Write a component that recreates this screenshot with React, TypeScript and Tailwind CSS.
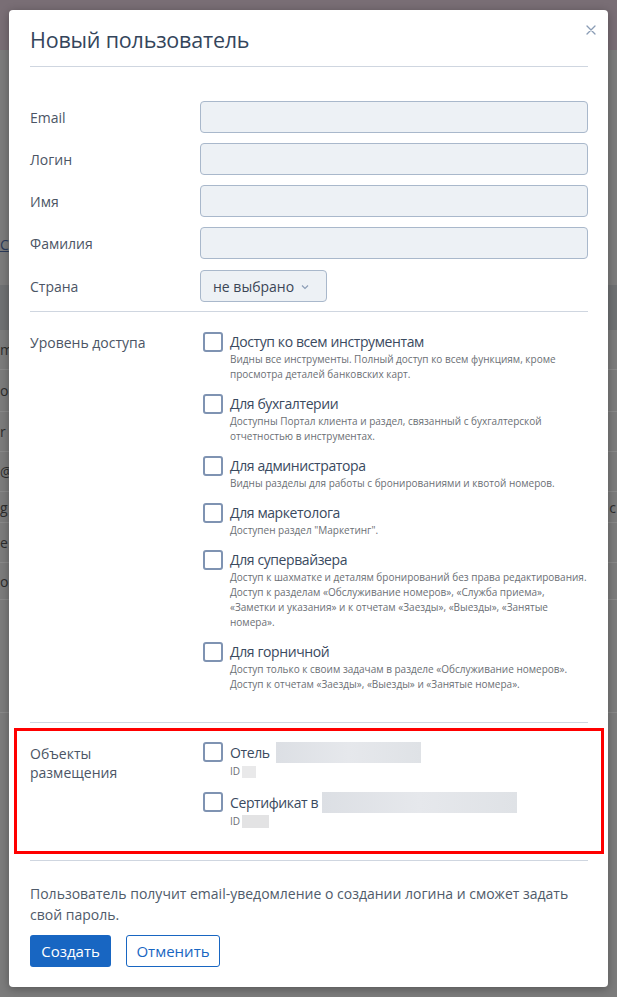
import React from "react";

const font = { fontFamily: '"Open Sans", "Noto Sans", sans-serif' };

type Item = { title: string; desc: string[] };

const items: Item[] = [
  {
    title: "Доступ ко всем инструментам",
    desc: [
      "Видны все инструменты. Полный доступ ко всем функциям, кроме",
      "просмотра деталей банковских карт.",
    ],
  },
  {
    title: "Для бухгалтерии",
    desc: [
      "Доступны Портал клиента и раздел, связанный с бухгалтерской",
      "отчетностью в инструментах.",
    ],
  },
  {
    title: "Для администратора",
    desc: ["Видны разделы для работы с бронированиями и квотой номеров."],
  },
  {
    title: "Для маркетолога",
    desc: ['Доступен раздел "Маркетинг".'],
  },
  {
    title: "Для супервайзера",
    desc: [
      "Доступ к шахматке и деталям бронирований без права редактирования.",
      "Доступ к разделам «Обслуживание номеров», «Служба приема»,",
      "«Заметки и указания» и к отчетам «Заезды», «Выезды», «Занятые",
      "номера».",
    ],
  },
  {
    title: "Для горничной",
    desc: [
      "Доступ только к своим задачам в разделе «Обслуживание номеров».",
      "Доступ к отчетам «Заезды», «Выезды» и «Занятые номера».",
    ],
  },
];

function Box() {
  return (
    <div className="ml-[3px] h-[20px] w-[20px] shrink-0 rounded-[3px] border-2 border-[#7f93b2] bg-white" />
  );
}

function Field({ label }: { label: string }) {
  return (
    <div className="grid grid-cols-[170px_388px] items-center">
      <div className="text-[14px] text-[#4b5565]">{label}</div>
      <div className="h-[32px] rounded-[4px] border border-[#a9b8cb] bg-[#edf1f5]" />
    </div>
  );
}

function Background() {
  const rows = [
    { h: 40, l: "m", r: "" },
    { h: 42, l: "o", r: "" },
    { h: 40, l: "r", r: "" },
    { h: 40, l: "@", r: "" },
    { h: 31, l: "g", r: "c" },
    { h: 40, l: "e", r: "" },
    { h: 37, l: "o", r: "" },
  ];
  return (
    <div className="h-[997px] w-[617px] overflow-hidden bg-[#7c7c7c]">
      <div className="h-[50px] bg-[#796e75]" />
      <div className="h-[180px]" />
      <div className="h-[55px] text-[14px] leading-[30px] text-[#2a3a5a] underline">С</div>
      <div className="h-[45px] bg-[#6f7173]" />
      {rows.map((r, i) => (
        <div
          key={i}
          className="flex items-center justify-between border-b border-[#8a8a8a] text-[14px] text-[#2c2c2c]"
          style={{ height: r.h }}
        >
          <span>{r.l}</span>
          <span className="mr-[1px]">{r.r}</span>
        </div>
      ))}
      <div className="h-[113px] border-b border-[#8a8a8a]" />
    </div>
  );
}

export default function App() {
  return (
    <div className="relative h-[997px] w-[617px] overflow-hidden" style={font}>
      <Background />
      <div className="absolute left-[9px] top-[10px] w-[599px] rounded-[4px] bg-white pb-[20px] pl-[21px] pr-[20px] pt-[14px] shadow-[0_2px_10px_rgba(0,0,0,0.3)]">
        <button className="absolute right-[11px] top-[14px] text-[#8a9cb5]" aria-label="close">
          <svg width="12" height="12" viewBox="0 0 12 12">
            <path d="M2 2 L10 10 M10 2 L2 10" stroke="currentColor" strokeWidth="1.3" strokeLinecap="round" />
          </svg>
        </button>
        <div className="border-b border-[#cfd6e0] pb-[10px] text-[21.5px] leading-[32px] tracking-[-0.2px] text-[#34455b]">
          Новый пользователь
        </div>

        <div className="flex flex-col gap-[10px] pt-[34px]">
          <Field label="Email" />
          <Field label="Логин" />
          <Field label="Имя" />
          <Field label="Фамилия" />
          <div className="grid grid-cols-[170px_388px] items-center pt-[1px]">
            <div className="text-[14px] text-[#4b5565]">Страна</div>
            <div>
              <div className="inline-flex h-[32px] w-[127px] items-center gap-[7px] rounded-[4px] border border-[#a9b8cb] bg-[#edf1f5] pl-[12px] text-[14px] text-[#3b4656]">
                <span>не выбрано</span>
                <svg width="8" height="6" viewBox="0 0 8 6" className="mt-[1px] text-[#8a9cb5]">
                  <path d="M1 1.5 L4 4.5 L7 1.5" stroke="currentColor" strokeWidth="1.1" fill="none" />
                </svg>
              </div>
            </div>
          </div>
        </div>

        <div className="mt-[9px] border-t border-[#cfd6e0] pb-[30px] pt-[20px]">
          <div className="grid grid-cols-[170px_388px]">
            <div className="pt-[1px] text-[14px] leading-[20px] text-[#4b5565]">Уровень доступа</div>
            <div className="flex flex-col gap-[12px]">
              {items.map((it) => (
                <div key={it.title} className="flex gap-[7px]">
                  <Box />
                  <div>
                    <div className="text-[14px] leading-[20px] tracking-[-0.4px] text-[#3a4a60]">{it.title}</div>
                    {it.desc.map((d) => (
                      <div key={d} className="whitespace-nowrap text-[10px] leading-[15px] text-[#6b6f75]">
                        {d}
                      </div>
                    ))}
                  </div>
                </div>
              ))}
            </div>
          </div>
        </div>

        <div className="relative border-t border-[#cfd6e0] pb-[30px] pt-[19px]">
          <div className="pointer-events-none absolute -left-[16px] -right-[16px] top-[5px] bottom-[6px] border-[3px] border-[#ff0000]" />
          <div className="grid grid-cols-[170px_388px]">
            <div className="pt-[2px] text-[14px] leading-[19px] text-[#4b5565]">
              Объекты
              <br />
              размещения
            </div>
            <div className="flex flex-col gap-[12px]">
              <div className="flex gap-[7px]">
                <Box />
                <div>
                  <div className="flex items-center text-[14px] leading-[20px] tracking-[-0.4px] text-[#3a4a60]">
                    <span>Отель</span>
                    <span className="ml-[6px] inline-block h-[21px] w-[145px] bg-gradient-to-r from-[#dcdfe4] via-[#e6e8ec] to-[#dfe2e6]" />
                  </div>
                  <div className="flex items-center text-[10px] leading-[17px] text-[#6b6f75]">
                    <span>ID</span>
                    <span className="ml-[2px] inline-block h-[12px] w-[14px] bg-[#e9e9ea]" />
                  </div>
                </div>
              </div>
              <div className="flex gap-[7px]">
                <Box />
                <div>
                  <div className="flex items-center text-[14px] leading-[20px] tracking-[-0.4px] text-[#3a4a60]">
                    <span>Сертификат в</span>
                    <span className="ml-[4px] inline-block h-[21px] w-[195px] bg-gradient-to-r from-[#dcdfe4] via-[#e6e8ec] to-[#dfe2e6]" />
                  </div>
                  <div className="flex items-center text-[10px] leading-[17px] text-[#6b6f75]">
                    <span>ID</span>
                    <span className="ml-[2px] inline-block h-[13px] w-[27px] bg-[#e3e3e4]" />
                  </div>
                </div>
              </div>
            </div>
          </div>
        </div>

        <div className="border-t border-[#cfd6e0] pt-[22px]">
          <p className="text-[14px] leading-[21px] text-[#4f5b6a]">
            Пользователь получит email-уведомление о создании логина и сможет задать свой пароль.
          </p>
          <div className="mt-[10px] flex gap-[15px]">
            <button className="h-[32px] w-[81px] rounded-[3px] bg-[#1866c2] text-[15px] text-white">Создать</button>
            <button className="h-[32px] w-[94px] rounded-[3px] border border-[#1866c2] bg-white text-[15px] text-[#1866c2]">
              Отменить
            </button>
          </div>
        </div>
      </div>
    </div>
  );
}
